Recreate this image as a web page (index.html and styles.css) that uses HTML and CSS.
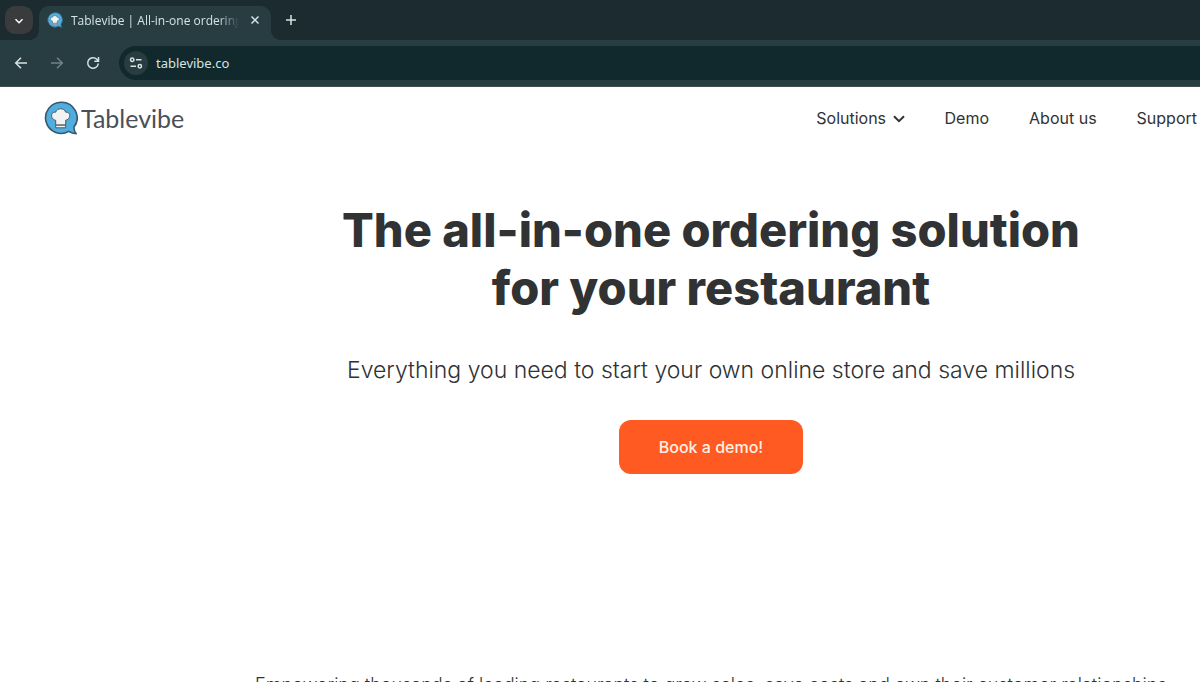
FILE: index.html
```html
<!DOCTYPE html>
<html lang="en">
<head>
<meta charset="utf-8">
<title>Tablevibe | All-in-one ordering solution</title>
<link rel="stylesheet" href="styles.css">
</head>
<body>
<svg class="defs" aria-hidden="true">
  <symbol id="mark" viewBox="0 0 34 34">
    <path d="M17 1.2a15.6 15.6 0 1 0 7.8 29.2c2 1.4 4.600 2.300 7.400 2.300-1.700-2-2.500-4.300-2.200-6.600A15.600 15.600 0 0 0 17 1.200Z" fill="#4fade0" stroke="#37596b" stroke-width="1.600" stroke-linejoin="round"/>
    <path d="M11.700 24v-4.700C6 18 6.500 10.600 11.600 11.200 13 6.600 20.300 6.600 21.700 11.200c5.200-.6 5.600 6.800 0 8.100V24Z" fill="#f2f2f2" stroke="#4c5960" stroke-width="1" stroke-linejoin="round"/>
    <path d="M11.700 24.200h10v2.600h-10z" fill="#f2f2f2" stroke="#4c5960" stroke-width="1" stroke-linejoin="round"/>
  </symbol>
</svg>
<header class="browser">
  <div class="tabstrip">
    <button class="tab-search" aria-label="Search tabs"><svg width="10" height="10" viewBox="0 0 10 10"><path d="M1.500 3.200 5 6.700l3.500-3.500"/></svg></button>
    <div class="tab">
      <svg class="favicon" width="16" height="16"><use href="#mark"/></svg>
      <span class="tab-title">Tablevibe | All-in-one ordering solution</span>
      <button class="icon-button tab-close" aria-label="Close tab"><svg width="10" height="10" viewBox="0 0 10 10"><path d="m1.500 1.500 7 7m0-7-7 7"/></svg></button>
    </div>
    <button class="icon-button new-tab" aria-label="New tab"><svg width="12" height="12" viewBox="0 0 12 12"><path d="M6 1v10M1 6h10"/></svg></button>
  </div>
  <div class="toolbar">
    <button class="icon-button nav-button" aria-label="Back"><svg width="14" height="14" viewBox="0 0 14 14"><path d="M13 7H2M7 1.700 1.700 7 7 12.300"/></svg></button>
    <button class="icon-button nav-button dim" aria-label="Forward"><svg width="14" height="14" viewBox="0 0 14 14"><path d="M1 7h11M7 1.700 12.300 7 7 12.300"/></svg></button>
    <button class="icon-button nav-button" aria-label="Reload"><svg width="14" height="14" viewBox="0 0 14 14"><path d="M12.300 7.500a5.300 5.300 0 1 1-1.500-4.200l1.500 1.500M12.500 1v4.200H8.300"/></svg></button>
    <div class="address">
      <button class="icon-button site-info" aria-label="Site information"><svg width="14" height="14" viewBox="0 0 14 14"><circle cx="3.200" cy="3.700" r="1.700"/><path d="M7 3.700h5.500M1.500 10.300H7"/><circle cx="10.800" cy="10.300" r="1.700"/></svg></button>
      <input class="url" type="text" value="tablevibe.co" aria-label="Address">
    </div>
  </div>
</header>
<div class="site-header">
  <a class="logo" href="#"><svg width="34" height="34"><use href="#mark"/></svg><span>Tablevibe</span></a>
  <nav class="site-nav">
    <a href="#">Solutions <svg class="chevron" width="12" height="8" viewBox="0 0 12 8"><path d="m1 1.200 5 5 5-5"/></svg></a>
    <a href="#">Demo</a>
    <a href="#">About us</a>
    <a href="#">Support</a>
  </nav>
</div>
<main class="hero">
  <h1>The all-in-one ordering solution<br>for your restaurant</h1>
  <p class="lead">Everything you need to start your own online store and save millions</p>
  <button class="cta">Book a demo!</button>
  <p class="summary">Empowering thousands of leading restaurants to grow sales, save costs and own their customer relationships</p>
</main>
</body>
</html>
```
FILE: styles.css
```css
* { box-sizing: border-box; }
html, body { height: 100%; }
body {
  margin: 0;
  overflow: hidden;
  background: #fff;
  color: #303233;
  font-family: Inter, sans-serif;
}
a { color: inherit; text-decoration: none; }
button { border: 0; padding: 0; font: inherit; }
.defs { position: absolute; width: 0; height: 0; }

.browser {
  background: #1c2b2f;
  color: #d5e3e3;
  font-family: "Noto Sans", sans-serif;
}
.browser button path, .browser button circle {
  fill: none;
  stroke: currentColor;
  stroke-width: 1.500;
}
.tabstrip { display: flex; height: 40px; padding: 6px 5px 0; }
.tab-search {
  width: 28px;
  height: 28px;
  border-radius: 10px;
  background: #393b3d;
  color: #fff;
}
.icon-button {
  display: flex;
  align-items: center;
  justify-content: center;
  flex: none;
  background: none;
  color: inherit;
}
.tab {
  position: relative;
  display: flex;
  align-items: center;
  width: 232px;
  margin-left: 6px;
  padding: 0 10px 6px 8px;
  border-radius: 10px 10px 0 0;
  background: #283d42;
}
.tab::before, .tab::after {
  content: "";
  position: absolute;
  bottom: 0;
  width: 10px;
  height: 10px;
}
.tab::before { right: 100%; background: radial-gradient(circle at 0 0, transparent 10px, #283d42 10px); }
.tab::after { left: 100%; background: radial-gradient(circle at 100% 0, transparent 10px, #283d42 10px); }
.favicon { flex: none; }
.tab-title {
  flex: 1;
  margin: 0 10px 0 8px;
  padding-top: 1px;
  overflow: hidden;
  white-space: nowrap;
  font-family: "Open Sans", sans-serif;
  font-size: 12px;
  line-height: 20px;
  mask-image: linear-gradient(to right, #000 88%, transparent);
}
.tab-close { width: 12px; height: 20px; }
.new-tab { width: 28px; height: 28px; margin-left: 6px; }
.toolbar {
  display: flex;
  align-items: center;
  gap: 8px;
  height: 47px;
  padding: 0 0 1px 7px;
  border-bottom: 1px solid #404d50;
  background: #283d42;
}
.nav-button { width: 28px; height: 28px; }
.dim { color: #708386; }
.address {
  display: flex;
  align-items: center;
  flex: 1;
  gap: 8px;
  height: 34px;
  margin-left: 4px;
  padding-left: 5px;
  border-radius: 17px 0 0 17px;
  background: #11282c;
}
.site-info { width: 24px; height: 24px; border-radius: 50%; background: #283d42; }
.url {
  flex: 1;
  min-width: 0;
  padding: 0;
  border: 0;
  outline: 0;
  background: none;
  color: inherit;
  font: 13px/20px "Noto Sans", sans-serif;
}

.site-header {
  display: flex;
  align-items: center;
  justify-content: space-between;
  height: 61px;
  padding: 0 3px 0 44px;
}
.logo {
  display: flex;
  align-items: center;
  gap: 3px;
  color: #4a5057;
  font: 25px/32px Lato, sans-serif;
}
.site-nav {
  display: flex;
  gap: 40px;
  font-size: 16px;
  font-weight: 400;
  line-height: 24px;
}
.chevron { margin-left: 2px; vertical-align: 1px; }
.chevron path { fill: none; stroke: #303233; stroke-width: 2; }

.hero {
  display: flex;
  flex-direction: column;
  align-items: center;
  padding: 53px 0 0 222px;
  text-align: center;
  white-space: nowrap;
}
h1 { margin: 0; font-size: 47px; font-weight: 800; line-height: 58px; }
.lead { margin: 33px 0 0; font-size: 23px; font-weight: 300; line-height: 40px; }
.cta {
  margin-top: 30px;
  padding: 15px 40px;
  border-radius: 12px;
  background: #ff5a22;
  color: #fff0e6;
  font-size: 16px;
  font-weight: 500;
  line-height: 24px;
}
.summary { margin: 197px 0 0; font-size: 18px; font-weight: 300; line-height: 28px; }
```
